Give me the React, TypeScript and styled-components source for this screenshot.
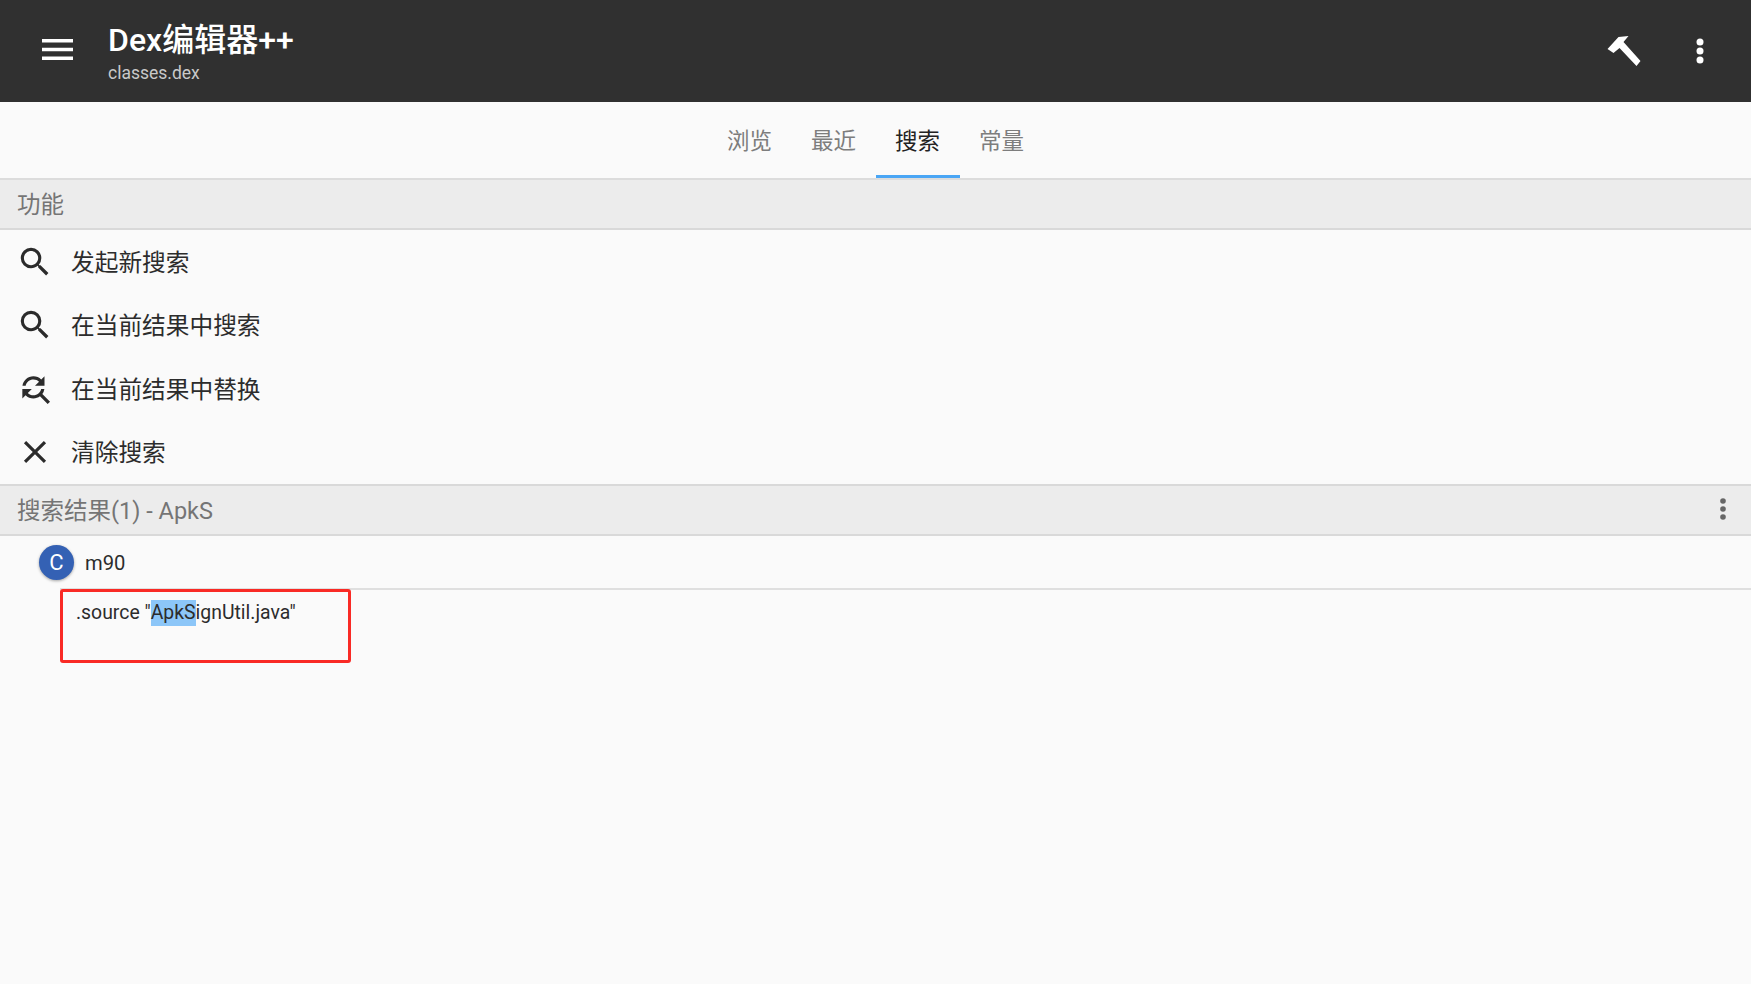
import React from "react";
import styled, { createGlobalStyle } from "styled-components";

const Global = createGlobalStyle`
  html, body { margin: 0; padding: 0; background: #fafafa; }
  body { font-family: Roboto, "Noto Sans CJK SC", sans-serif; }
  * { box-sizing: border-box; }
`;
const Page = styled.div`
  width: 1751px; height: 984px; overflow: hidden; background: #fafafa;
  display: flex; flex-direction: column;
`;
const Toolbar = styled.header`
  height: 102px; background: #303030; display: flex; align-items: center; color: #fff;
  padding-right: 13px;
`;
const NavButton = styled.div`
  width: 108px; height: 102px; padding: 0 0 3px 42px; display: flex; align-items: center; flex: none;
`;
const Titles = styled.div`
  flex: 1; display: flex; flex-direction: column; margin-top: 4px;
`;
const Title = styled.div`
  font-size: 32px; line-height: 36px; font-weight: 500; color: #fff;
`;
const Subtitle = styled.div`
  font-size: 17.5px; line-height: 22px; margin-top: 4px; color: #c9c9c9;
`;
const ToolIcon = styled.div`
  width: 77px; height: 102px; display: flex; align-items: center; justify-content: center;
`;
const Tabs = styled.nav`
  height: 78px; display: flex; justify-content: center; border-bottom: 2px solid #dcdcdc;
`;
const TabItem = styled.div<{ $active?: boolean }>`
  width: 84px; height: 76px; display: flex; align-items: center; justify-content: center;
  font-size: 22.5px;
  color: ${(p) => (p.$active ? "#222" : "#7d7d7d")};
  border-bottom: 3px solid ${(p) => (p.$active ? "#4aa6f5" : "transparent")};
`;
const SectionHeader = styled.div`
  height: 50px; background: #ececec; border-bottom: 2px solid #d9d9d9;
  display: flex; align-items: center; justify-content: space-between;
  padding: 0 17px 2px; font-size: 23.5px; color: #757575;
`;
const SectionHeaderTop = styled(SectionHeader)`
  border-top: 2px solid #d9d9d9; height: 52px;
`;
const ActionList = styled.div`
  display: flex; flex-direction: column; height: 254px;
`;
const ActionRow = styled.div`
  height: 64px; display: flex; align-items: center; padding-left: 17px;
  font-size: 23.7px; color: #2c2c2c;
`;
const ActionLabel = styled.span`
  padding-bottom: 2px;
`;
const ActionIcon = styled.div`
  width: 54px; height: 38px; flex: none; display: flex; align-items: center;
  margin-left: -1px; margin-right: 1px;
`;
const ClassRow = styled.div`
  height: 52px; display: flex; align-items: center; padding-left: 39px;
`;
const Avatar = styled.div`
  width: 35px; height: 35px; border-radius: 50%; background: #3461b4; color: #fff;
  display: flex; align-items: center; justify-content: center; font-size: 22px;
  box-shadow: 0 1px 3px rgba(0,0,0,.35); flex: none;
`;
const ClassName = styled.div`
  margin-left: 11px; padding-top: 2px; font-size: 20.2px; color: #2c2c2c;
`;
const Divider = styled.div`
  height: 2px; background: #dfdfdf; margin-left: 60px;
`;
const ResultArea = styled.div`
  margin-left: 60px; margin-top: -1px; width: 291px; height: 74px;
  border: 3px solid #f92a25; border-radius: 3px; padding: 8px 0 0 13px;
  font-size: 19.4px; line-height: 26px; color: #2c2c2c;
`;
const Mark = styled.span`
  display: inline-block; height: 26px; background: #8cc6f8;
`;

const Search = () => (
  <svg width="38" height="38" viewBox="0 0 24 24" fill="#2b2b2b">
    <path d="M15.5 14h-.79l-.28-.27A6.47 6.47 0 0 0 16 9.5 6.5 6.5 0 1 0 9.5 16c1.61 0 3.09-.59 4.23-1.57l.27.28v.79l5 4.99L20.49 19l-4.99-5zm-6 0C7.01 14 5 11.99 5 9.5S7.01 5 9.5 5 14 7.01 14 9.5 11.99 14 9.5 14z" />
  </svg>
);

export default function App() {
  return (
    <Page>
      <Global />
      <Toolbar>
        <NavButton>
          <svg width="31" height="21" viewBox="0 0 31 21" fill="#fff">
            <rect x="0" y="0" width="31" height="3.5" />
            <rect x="0" y="8.75" width="31" height="3.5" />
            <rect x="0" y="17.5" width="31" height="3.5" />
          </svg>
        </NavButton>
        <Titles>
          <Title>Dex编辑器++</Title>
          <Subtitle>classes.dex</Subtitle>
        </Titles>
        <ToolIcon>
          <svg width="36" height="34" viewBox="0 0 36 34" fill="#fff">
            <path d="M2.5 15 L13.5 3 L23.5 2 L18.5 8 L35.5 27 L31.5 32 L14.5 14 L8.5 19 Z" />
          </svg>
        </ToolIcon>
        <ToolIcon>
          <svg width="8" height="26" viewBox="0 0 8 26" fill="#fff">
            <circle cx="4" cy="4" r="3.5" />
            <circle cx="4" cy="13" r="3.5" />
            <circle cx="4" cy="22" r="3.5" />
          </svg>
        </ToolIcon>
      </Toolbar>
      <Tabs>
        <TabItem>浏览</TabItem>
        <TabItem>最近</TabItem>
        <TabItem $active>搜索</TabItem>
        <TabItem>常量</TabItem>
      </Tabs>
      <SectionHeader>功能</SectionHeader>
      <ActionList>
        <ActionRow>
          <ActionIcon><Search /></ActionIcon>
          <ActionLabel>发起新搜索</ActionLabel>
        </ActionRow>
        <ActionRow>
          <ActionIcon><Search /></ActionIcon>
          <ActionLabel>在当前结果中搜索</ActionLabel>
        </ActionRow>
        <ActionRow>
          <ActionIcon>
            <svg width="38" height="38" viewBox="0 0 24 24" fill="#2b2b2b">
              <path d="M11 6c1.38 0 2.63.56 3.54 1.46L12 10h6V4l-2.05 2.05A6.976 6.976 0 0 0 11 4c-3.53 0-6.43 2.61-6.92 6H6.1c.46-2.28 2.48-4 4.9-4zm5.64 9.14A6.89 6.89 0 0 0 17.92 12H15.9c-.46 2.28-2.48 4-4.9 4-1.38 0-2.63-.56-3.54-1.46L10 12H4v6l2.05-2.05A6.976 6.976 0 0 0 11 18c1.55 0 2.98-.51 4.14-1.36L20 21.49 21.49 20l-4.85-4.86z" />
            </svg>
          </ActionIcon>
          <ActionLabel>在当前结果中替换</ActionLabel>
        </ActionRow>
        <ActionRow>
          <ActionIcon>
            <svg width="38" height="38" viewBox="0 0 24 24" fill="#2b2b2b">
              <path d="M19 6.41 17.59 5 12 10.59 6.41 5 5 6.41 10.59 12 5 17.59 6.41 19 12 13.41 17.59 19 19 17.59 13.41 12z" />
            </svg>
          </ActionIcon>
          <ActionLabel>清除搜索</ActionLabel>
        </ActionRow>
      </ActionList>
      <SectionHeaderTop>
        <span>搜索结果(1) - ApkS</span>
        <svg width="6" height="22" viewBox="0 0 6 22" fill="#666" style={{ marginRight: 8 }}>
          <circle cx="3" cy="3" r="2.8" />
          <circle cx="3" cy="11" r="2.8" />
          <circle cx="3" cy="19" r="2.8" />
        </svg>
      </SectionHeaderTop>
      <ClassRow>
        <Avatar>C</Avatar>
        <ClassName>m90</ClassName>
      </ClassRow>
      <Divider />
      <ResultArea>
        .source "<Mark>ApkS</Mark>ignUtil.java"
      </ResultArea>
    </Page>
  );
}
